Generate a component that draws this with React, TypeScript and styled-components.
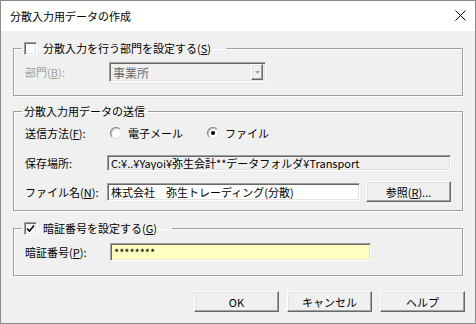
import React from "react";
import styled, { createGlobalStyle, css } from "styled-components";

const GlobalStyle = createGlobalStyle`
  html, body {
    margin: 0;
    padding: 0;
    background: #ffffff;
  }
  body {
    font-family: "Noto Sans CJK JP", "Noto Sans", sans-serif;
    font-size: 11px;
    color: #000;
  }
  * {
    box-sizing: border-box;
  }
`;

const sunken = css`
  border-style: solid;
  border-width: 1px;
  border-color: #a0a0a0 #ffffff #ffffff #a0a0a0;
  box-shadow: inset 1px 1px 0 #696969, inset -1px -1px 0 #e3e3e3;
`;

const raised = css`
  border-style: solid;
  border-width: 1px;
  border-color: #ffffff #696969 #696969 #ffffff;
  box-shadow: inset -1px -1px 0 #a0a0a0, inset 1px 1px 0 #e3e3e3;
`;

const Window = styled.div`
  width: 476px;
  height: 324px;
  border: 1px solid #8c8c8c;
  background: #f0f0f0;
  display: flex;
  flex-direction: column;
`;

const TitleBar = styled.div`
  height: 30px;
  flex: none;
  background: #ffffff;
  display: flex;
  align-items: center;
  justify-content: space-between;
  padding: 0 9px 0 9px;
`;

const Title = styled.span`
  font-size: 11px;
  line-height: 14px;
`;

const CloseIcon = styled.svg`
  display: block;
  margin-top: -1px;
`;

const Body = styled.div`
  display: flex;
  flex-direction: column;
  padding: 10px 12px 0 12px;
`;

const Group = styled.fieldset<{ $top: number; $pad: string; $gap: number }>`
  margin: ${(p) => p.$top}px 0 0 0;
  padding: ${(p) => p.$pad};
  min-width: 0;
  border: 1px solid #a0a0a0;
  box-shadow: inset 1px 1px 0 #ffffff, 1px 1px 0 #ffffff;
  display: flex;
  flex-direction: column;
  gap: ${(p) => p.$gap}px;
`;

const Legend = styled.legend<{ $after?: number }>`
  margin-left: -3px;
  padding: 0 ${(p) => p.$after ?? 3}px 0 2px;
  height: 14px;
  line-height: 14px;
  display: flex;
  align-items: center;
  gap: 6px;
  white-space: nowrap;
`;

const CheckBox = styled.span`
  width: 13px;
  height: 13px;
  flex: none;
  background: #ffffff;
  ${sunken};
  display: flex;
  align-items: center;
  justify-content: center;
`;

const Row = styled.div<{ $h: number }>`
  height: ${(p) => p.$h}px;
  display: flex;
  align-items: center;
`;

const Label = styled.span<{ $w: number; $muted?: boolean }>`
  width: ${(p) => p.$w}px;
  flex: none;
  line-height: 14px;
  white-space: nowrap;
  color: ${(p) => (p.$muted ? "#a0a0a0" : "#000")};
`;

const Field = styled.div<{ $w: number; $h: number; $bg: string }>`
  width: ${(p) => p.$w}px;
  height: ${(p) => p.$h}px;
  flex: none;
  background: ${(p) => p.$bg};
  ${sunken};
  display: flex;
  align-items: center;
  padding: 0 3px;
  line-height: 14px;
  white-space: nowrap;
  overflow: hidden;
`;

const Combo = styled.div`
  width: 157px;
  height: 20px;
  flex: none;
  background: #f0f0f0;
  ${sunken};
  display: flex;
  align-items: center;
  justify-content: space-between;
  padding: 2px 2px 2px 3px;
  color: #6d6d6d;
  font-size: 12px;
`;

const DropButton = styled.span`
  width: 12px;
  height: 16px;
  ${raised};
  display: flex;
  align-items: center;
  justify-content: center;
`;

const RadioGroup = styled.div`
  display: flex;
  align-items: center;
  gap: 24px;
  margin-left: 3px;
`;

const RadioOption = styled.label`
  display: flex;
  align-items: center;
  gap: 6px;
  line-height: 14px;
`;

const RadioDot = styled.span<{ $on?: boolean }>`
  width: 12px;
  height: 12px;
  border-radius: 50%;
  background: #ffffff;
  border: 1px solid;
  border-color: #808080 #e3e3e3 #e3e3e3 #808080;
  box-shadow: inset 1px 1px 0 #c8c8c8;
  display: flex;
  align-items: center;
  justify-content: center;

  &::after {
    content: "";
    width: 4px;
    height: 4px;
    border-radius: 50%;
    background: #000;
    display: ${(p) => (p.$on ? "block" : "none")};
  }
`;

const Button = styled.button<{ $w?: number }>`
  width: ${(p) => p.$w ?? 85}px;
  height: 21px;
  flex: none;
  background: #f0f0f0;
  ${raised};
  font-family: inherit;
  font-size: 11px;
  line-height: 14px;
  color: #000;
  padding: 0;
  display: flex;
  align-items: center;
  justify-content: center;
`;

const Buttons = styled.div`
  margin: 15px -2px 0 0;
  display: flex;
  justify-content: flex-end;
  gap: 8px;
`;

const FieldRow = styled.div`
  display: flex;
  align-items: center;
  gap: 6px;
`;

const App: React.FC = () => {
  return (
    <>
      <GlobalStyle />
      <Window>
        <TitleBar>
          <Title>分散入力用データの作成</Title>
          <CloseIcon width="11" height="11" viewBox="0 0 11 11">
            <path d="M0.5 0.5 L10.5 10.5 M10.5 0.5 L0.5 10.5" stroke="#000" strokeWidth="1" />
          </CloseIcon>
        </TitleBar>
        <Body>
          <Group $top={0} $pad="7px 11px 13px 11px" $gap={0}>
            <Legend $after={15}>
              <CheckBox />
              <span>
                分散入力を行う部門を設定する(<u>S</u>)
              </span>
            </Legend>
            <Row $h={20}>
              <Label $w={84} $muted>
                部門(<u>B</u>):
              </Label>
              <Combo>
                <span>事業所</span>
                <DropButton>
                  <svg width="5" height="3" viewBox="0 0 5 3">
                    <path d="M0 0 H5 L2.5 3 Z" fill="#a0a0a0" />
                  </svg>
                </DropButton>
              </Combo>
            </Row>
          </Group>

          <Group $top={8} $pad="7px 11px 8px 11px" $gap={0}>
            <Legend>分散入力用データの送信</Legend>
            <Row $h={16}>
              <Label $w={82}>
                送信方法(<u>F</u>):
              </Label>
              <RadioGroup>
                <RadioOption>
                  <RadioDot />
                  電子メール
                </RadioOption>
                <RadioOption>
                  <RadioDot $on />
                  ファイル
                </RadioOption>
              </RadioGroup>
            </Row>
            <Row $h={16} style={{ marginTop: 14 }}>
              <Label $w={82}>保存場所:</Label>
              <Field $w={344} $h={16} $bg="#f0f0f0">
                C:¥..¥Yayoi¥弥生会計**データフォルダ¥Transport
              </Field>
            </Row>
            <Row $h={21} style={{ marginTop: 10 }}>
              <Label $w={82}>
                ファイル名(<u>N</u>):
              </Label>
              <FieldRow>
                <Field $w={253} $h={18} $bg="#ffffff">
                  株式会社　弥生トレーディング(分散)
                </Field>
                <Button>
                  参照(<u>R</u>)...
                </Button>
              </FieldRow>
            </Row>
          </Group>

          <Group $top={10} $pad="8px 11px 14px 11px" $gap={0}>
            <Legend $after={15}>
              <CheckBox>
                <svg width="9" height="9" viewBox="0 0 9 9">
                  <path d="M1 4.5 L3.5 7 L8 1.5" stroke="#000" strokeWidth="1.6" fill="none" />
                </svg>
              </CheckBox>
              <span>
                暗証番号を設定する(<u>G</u>)
              </span>
            </Legend>
            <Row $h={18}>
              <Label $w={85}>
                暗証番号(<u>P</u>):
              </Label>
              <Field $w={261} $h={18} $bg="#ffffc0">
                ********
              </Field>
            </Row>
          </Group>

          <Buttons>
            <Button>OK</Button>
            <Button>キャンセル</Button>
            <Button>ヘルプ</Button>
          </Buttons>
        </Body>
      </Window>
    </>
  );
};

export default App;
